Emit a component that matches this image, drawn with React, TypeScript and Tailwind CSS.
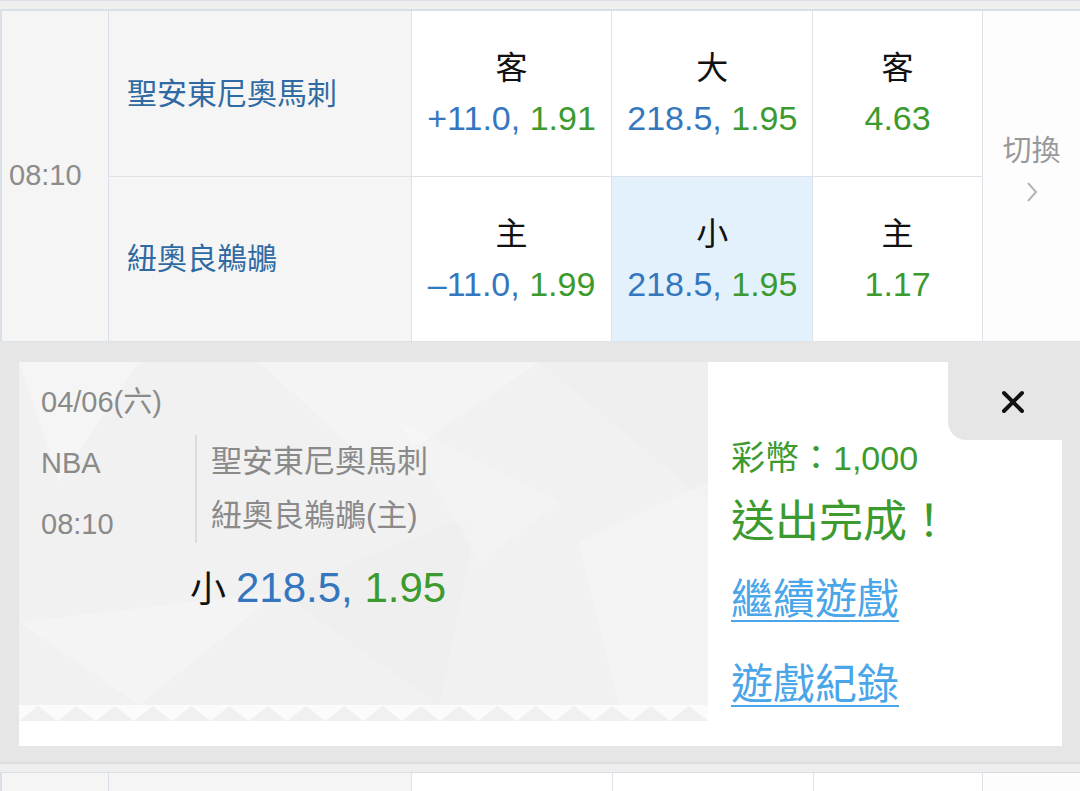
import { X } from 'lucide-react';

const FONT = "font-['Liberation_Sans','Noto_Sans_CJK_TC',sans-serif]";

interface OddsCellProps {
  label: string;
  line?: string;
  price: string;
  width: string;
  active?: boolean;
  last?: boolean;
}

function OddsCell({ label, line, price, width, active, last }: OddsCellProps) {
  return (
    <div
      className={`${width} flex flex-col items-center justify-center border-[#dde2e8] ${last ? '' : 'border-r'} ${
        active ? 'bg-[#e3f1fc]' : 'bg-white'
      }`}
    >
      <div className="text-[32px] leading-[50px] text-[#111]">{label}</div>
      <div className="text-[34px] leading-[50px] whitespace-pre">
        {line && <span className="text-[#3577bf]">{line}, </span>}
        <span className="text-[#3c9a2e]">{price}</span>
      </div>
    </div>
  );
}

function TeamRow({
  team,
  cells,
  border,
}: {
  team: string;
  cells: OddsCellProps[];
  border?: boolean;
}) {
  return (
    <div className={`flex flex-1 ${border ? 'border-b border-[#dde2e8]' : ''}`}>
      <div className="w-[303px] flex items-center pl-[18px] bg-[#f5f5f5] border-r border-[#dde2e8] text-[30px] text-[#2f6aa3]">
        {team}
      </div>
      {cells.map((c, i) => (
        <OddsCell key={i} {...c} />
      ))}
    </div>
  );
}

// serrated bottom edge of the ticket
function Teeth() {
  const p = 689 / 18;
  const pts: string[] = ['0,16'];
  for (let i = 0; i < 18; i++) {
    pts.push(`${(i + 0.5) * p},1`, `${(i + 1) * p},16`);
  }
  return (
    <svg width="689" height="16" viewBox="0 0 689 16" className="block">
      <rect width="689" height="16" fill="#fbfbfb" />
      <polygon points={pts.join(' ')} fill="#f0f0f0" />
    </svg>
  );
}

// faint low-poly backdrop of the ticket
function Poly() {
  return (
    <svg width="689" height="343" viewBox="0 0 689 343" className="absolute left-0 top-0">
      <polygon points="0,0 120,0 40,120" fill="#ffffff" opacity="0.3" />
      <polygon points="240,0 520,0 360,110" fill="#ffffff" opacity="0.22" />
      <polygon points="520,0 689,0 689,140" fill="#ebebeb" opacity="0.35" />
      <polygon points="0,260 260,230 120,343" fill="#ffffff" opacity="0.25" />
      <polygon points="260,230 460,150 420,343" fill="#ebebeb" opacity="0.3" />
      <polygon points="560,180 689,120 689,343 600,343" fill="#ffffff" opacity="0.22" />
      <polygon points="380,60 540,140 460,200" fill="#ffffff" opacity="0.2" />
    </svg>
  );
}

export default function App() {
  return (
    <div className={`w-[1080px] h-[791px] overflow-hidden bg-[#e6e6e6] ${FONT}`}>
      {/* top strip */}
      <div className="h-[11px] bg-[#efefef] border-t border-b-2 border-[#d9dfe6]" />

      {/* match row */}
      <div className="flex h-[331px] border-b border-[#dde2e8]">
        <div className="w-[109px] flex items-center pl-[7px] bg-[#f5f5f5] border-l-2 border-r border-[#d9dfe6] text-[29px] text-[#8c8c8c]">
          08:10
        </div>
        <div className="w-[874px] flex flex-col border-r border-[#dde2e8]">
          <TeamRow
            team="聖安東尼奧馬刺"
            border
            cells={[
              { label: '客', line: '+11.0', price: '1.91', width: 'w-[201px]' },
              { label: '大', line: '218.5', price: '1.95', width: 'w-[201px]' },
              { label: '客', price: '4.63', width: 'w-[169px]', last: true },
            ]}
          />
          <TeamRow
            team="紐奧良鵜鶘"
            cells={[
              { label: '主', line: '–11.0', price: '1.99', width: 'w-[201px]' },
              { label: '小', line: '218.5', price: '1.95', width: 'w-[201px]', active: true },
              { label: '主', price: '1.17', width: 'w-[169px]', last: true },
            ]}
          />
        </div>
        <div className="flex-1 flex flex-col items-center justify-center bg-[#fdfdfd] pb-[18px]">
          <div className="text-[29px] leading-[40px] text-[#999]">切換</div>
          <svg width="14" height="24" viewBox="0 0 14 24" className="mt-[9px]">
            <polyline points="3,3 11,12 3,21" fill="none" stroke="#b5b5b5" strokeWidth="2" />
          </svg>
        </div>
      </div>

      {/* confirmation ticket */}
      <div className="h-[422px] pt-[20px] pl-[19px] pr-[18px] pb-[18px] border-b-2 border-[#dedede]">
        <div className="flex h-[384px] bg-white">
          <div className="w-[689px] flex flex-col">
            <div className="relative h-[343px] bg-[#f1f1f1] pl-[22px] pt-[18px] overflow-hidden">
              <Poly />
              <div className="relative">
                <div className="text-[29px] leading-[44px] text-[#8a8a8a]">04/06(六)</div>
                <div className="flex mt-[11px] h-[108px]">
                  <div className="w-[154px] flex flex-col text-[29px] text-[#8a8a8a]">
                    <div className="leading-[56px]">NBA</div>
                    <div className="leading-[56px] mt-[5px]">08:10</div>
                  </div>
                  <div className="border-l-2 border-[#dcdcdc] pl-[14px] flex flex-col text-[31px] text-[#8a8a8a]">
                    <div className="leading-[54px]">聖安東尼奧馬刺</div>
                    <div className="leading-[54px]">紐奧良鵜鶘(主)</div>
                  </div>
                </div>
                <div className="mt-[20px] pl-[149px] leading-[50px] whitespace-pre">
                  <span className="text-[36px] text-[#111]">小 </span>
                  <span className="text-[42px] text-[#3577bf]">218.5, </span>
                  <span className="text-[42px] text-[#3c9a2e]">1.95</span>
                </div>
              </div>
            </div>
            <Teeth />
          </div>

          <div className="relative flex-1 pl-[23px] pt-[76px]">
            <div className="absolute right-0 top-0 w-[114px] h-[78px] bg-[#e6e6e6] rounded-bl-[18px] flex items-center justify-center pl-[16px] pt-[2px]">
              <X size={36} strokeWidth={2.6} className="text-[#111]" />
            </div>
            <div className="text-[34px] leading-[40px] text-[#3c9a2e]">彩幣：1,000</div>
            <div className="mt-[16px] text-[44px] leading-[56px] text-[#3c9a2e]">送出完成！</div>
            <div className="mt-[22px] text-[42px] leading-[56px] text-[#4aa6e8] underline decoration-2 underline-offset-[6px]">
              繼續遊戲
            </div>
            <div className="mt-[29px] text-[42px] leading-[56px] text-[#4aa6e8] underline decoration-2 underline-offset-[6px]">
              遊戲紀錄
            </div>
          </div>
        </div>
      </div>

      {/* next row peeking in */}
      <div className="h-[9px] bg-[#eeeeee] border-b border-[#d9dfe6]" />
      <div className="flex h-[20px]">
        <div className="w-[109px] bg-[#f5f5f5] border-l-2 border-r border-[#d9dfe6]" />
        <div className="w-[303px] bg-[#f5f5f5] border-r border-[#dde2e8]" />
        <div className="w-[201px] bg-white border-r border-[#dde2e8]" />
        <div className="w-[201px] bg-white border-r border-[#dde2e8]" />
        <div className="w-[169px] bg-white border-r border-[#dde2e8]" />
        <div className="flex-1 bg-[#fdfdfd]" />
      </div>
    </div>
  );
}
